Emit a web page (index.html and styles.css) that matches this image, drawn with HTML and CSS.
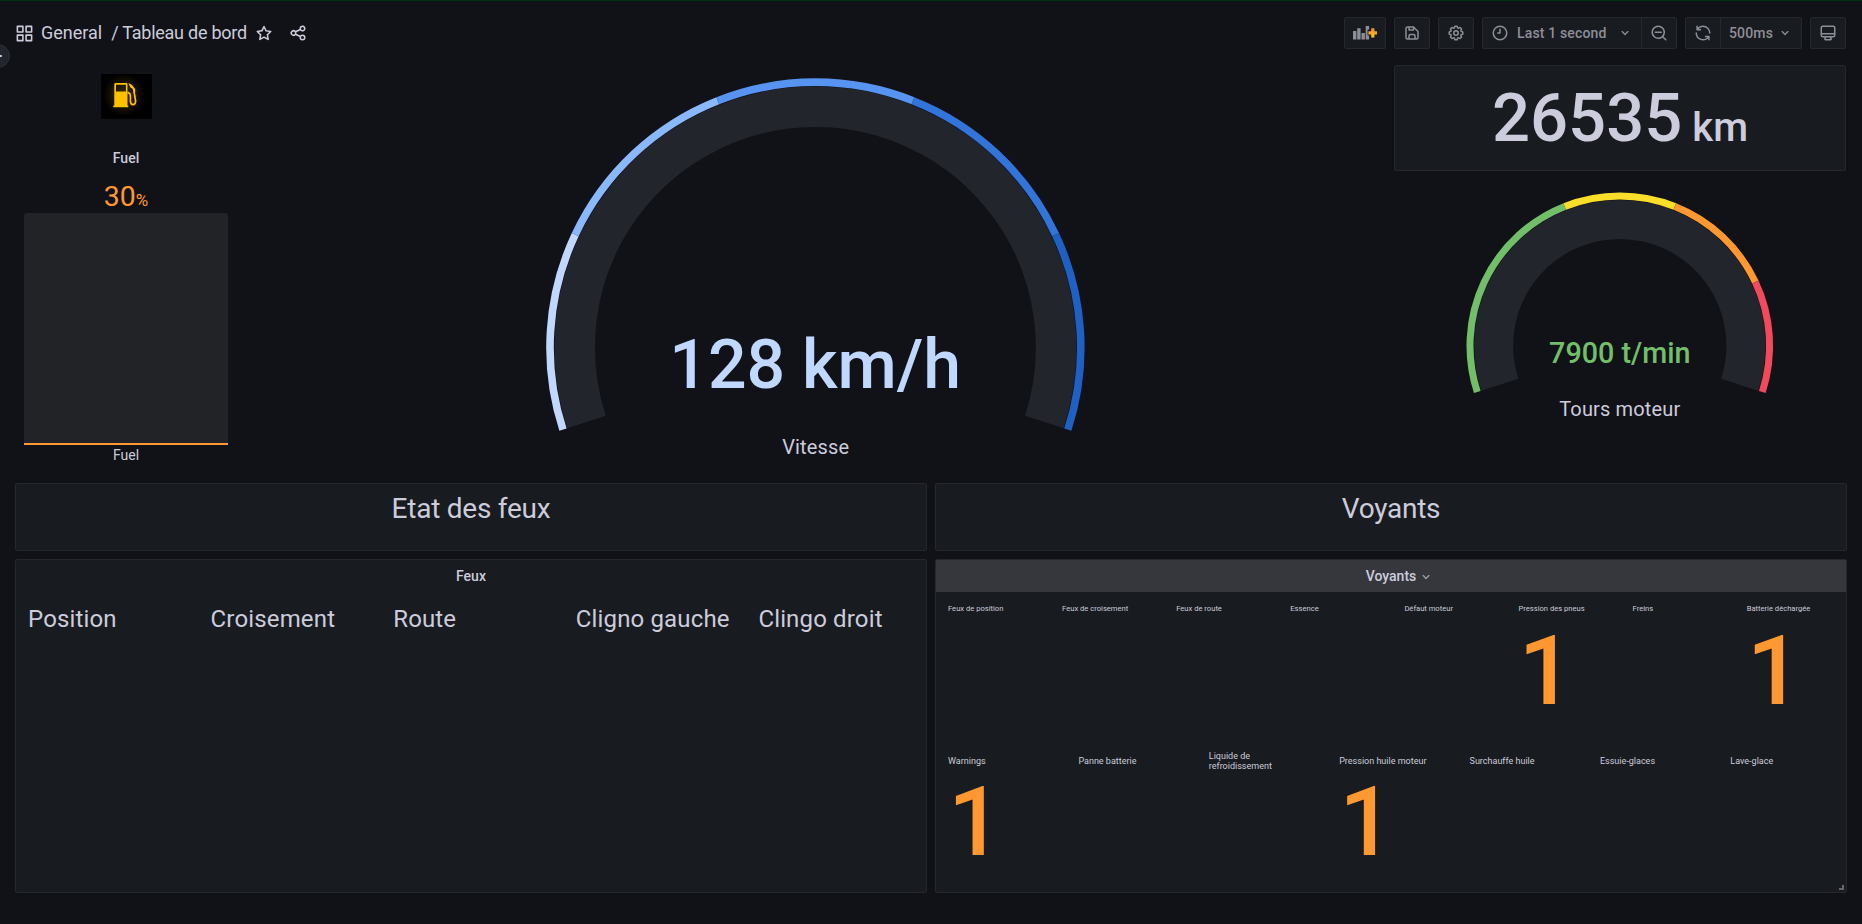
FILE: index.html
```
<!DOCTYPE html>
<html lang="fr">
<head>
<meta charset="utf-8">
<title>Tableau de bord</title>
<link rel="stylesheet" href="styles.css">
</head>
<body>
<div class="sidemenu-toggle"><span class="toggle-mark"></span></div>
<header class="navbar">
  <div class="crumbs">
    <svg class="icon icon-apps" viewBox="0 0 24 24"><path d="M10,13H3a1,1,0,0,0-1,1v7a1,1,0,0,0,1,1h7a1,1,0,0,0,1-1V14A1,1,0,0,0,10,13ZM9,20H4V15H9ZM21,2H14a1,1,0,0,0-1,1v7a1,1,0,0,0,1,1h7a1,1,0,0,0,1-1V3A1,1,0,0,0,21,2ZM20,9H15V4h5Zm1,4H14a1,1,0,0,0-1,1v7a1,1,0,0,0,1,1h7a1,1,0,0,0,1-1V14A1,1,0,0,0,21,13Zm-1,7H15V15h5ZM10,2H3A1,1,0,0,0,2,3v7a1,1,0,0,0,1,1h7a1,1,0,0,0,1-1V3A1,1,0,0,0,10,2ZM9,9H4V4H9Z"/></svg>
    <span class="crumb-folder">General</span>
    <span class="crumb-title">/ Tableau de bord</span>
    <svg class="icon icon-star" viewBox="0 0 24 24"><path d="M22,9.67A1,1,0,0,0,21.14,9l-5.69-.83L12.9,3a1,1,0,0,0-1.8,0L8.55,8.16,2.86,9a1,1,0,0,0-.81.68,1,1,0,0,0,.25,1l4.13,4-1,5.68A1,1,0,0,0,6.9,21.44L12,18.77l5.1,2.67a.93.93,0,0,0,.46.12,1,1,0,0,0,.59-.19,1,1,0,0,0,.4-1l-1-5.68,4.13-4A1,1,0,0,0,22,9.67Zm-6.15,4a1,1,0,0,0-.29.88l.72,4.2-3.76-2a1.06,1.06,0,0,0-.94,0l-3.76,2,.72-4.2a1,1,0,0,0-.29-.88l-3-3,4.21-.61a1,1,0,0,0,.76-.55L12,5.7l1.88,3.82a1,1,0,0,0,.76.55l4.21.61Z"/></svg>
    <svg class="icon icon-share" viewBox="0 0 24 24"><path d="M18,14a4,4,0,0,0-3.08,1.48l-5.1-2.35a3.64,3.64,0,0,0,0-2.26l5.1-2.35A4,4,0,1,0,14,6a4.17,4.17,0,0,0,.07.71L8.79,9.14a4,4,0,1,0,0,5.72l5.28,2.43A4.17,4.17,0,0,0,14,18a4,4,0,1,0,4-4ZM18,4a2,2,0,1,1-2,2A2,2,0,0,1,18,4ZM6,14a2,2,0,1,1,2-2A2,2,0,0,1,6,14Zm12,6a2,2,0,1,1,2-2A2,2,0,0,1,18,20Z"/></svg>
  </div>
  <div class="tools">
    <div class="group"><button class="tool tool-add"><svg class="icon-add" viewBox="0 0 24 14"><defs><linearGradient id="plus-fill" x1="0" y1="0" x2="0" y2="1"><stop offset="0" stop-color="#f58a2e"/><stop offset="1" stop-color="#fcc61a"/></linearGradient></defs><path class="bars" d="M0 5h3.400v8.400H0zM4.200 2.200h3.400v11.200H4.200zM8.500 7h3.400v6.400H8.500zM12.700 0h3.400v3.500h-1.500v6h1.500v3.900h-3.400z"/><path fill="url(#plus-fill)" d="M18.200 2.300h3.200v3h2.800v3.100h-2.800v3h-3.200v-3h-2.800V5.300h2.800z"/></svg></button></div>
    <div class="group"><button class="tool tool-icon"><svg class="icon" viewBox="0 0 24 24"><path d="m20.710 9.290-6-6a1 1 0 0 0-.32-.21A1.090 1.090 0 0 0 14 3H6a3 3 0 0 0-3 3v12a3 3 0 0 0 3 3h12a3 3 0 0 0 3-3v-8a1 1 0 0 0-.29-.71zM9 5h4v2H9zm6 14H9v-3a1 1 0 0 1 1-1h4a1 1 0 0 1 1 1zm4-1a1 1 0 0 1-1 1h-1v-3a3 3 0 0 0-3-3h-4a3 3 0 0 0-3 3v3H6a1 1 0 0 1-1-1V6a1 1 0 0 1 1-1h1v3a1 1 0 0 0 1 1h6a1 1 0 0 0 1-1V6.410l4 4z"/></svg></button></div>
    <div class="group"><button class="tool tool-icon"><svg class="icon" viewBox="0 0 24 24"><path d="M21.320,9.550l-1.890-.63.89-1.780A1,1,0,0,0,20.130,6L18,3.870a1,1,0,0,0-1.150-.19l-1.780.89-.63-1.890A1,1,0,0,0,13.500,2h-3a1,1,0,0,0-.95.68L8.920,4.570,7.140,3.680A1,1,0,0,0,6,3.870L3.870,6a1,1,0,0,0-.19,1.150l.89,1.780-1.890.63A1,1,0,0,0,2,10.500v3a1,1,0,0,0,.68.95l1.890.63-.89,1.780A1,1,0,0,0,3.870,18L6,20.130a1,1,0,0,0,1.150.19l1.780-.89.63,1.890a1,1,0,0,0,.95.68h3a1,1,0,0,0,.95-.68l.63-1.890,1.780.89A1,1,0,0,0,18,20.130L20.130,18a1,1,0,0,0,.19-1.150l-.89-1.780,1.890-.63A1,1,0,0,0,22,13.500v-3A1,1,0,0,0,21.320,9.550ZM20,12.780l-1.200.4A2,2,0,0,0,17.640,16l.57,1.140-1.100,1.100L16,17.640a2,2,0,0,0-2.790,1.160l-.4,1.200H11.220l-.4-1.200A2,2,0,0,0,8,17.640l-1.140.57-1.100-1.100L6.360,16A2,2,0,0,0,5.200,13.180L4,12.780V11.220l1.200-.4A2,2,0,0,0,6.360,8L5.790,6.890l1.100-1.100L8,6.360A2,2,0,0,0,10.820,5.200l.4-1.200h1.560l.4,1.200A2,2,0,0,0,16,6.360l1.140-.57,1.100,1.100L17.640,8a2,2,0,0,0,1.160,2.790l1.200.4ZM12,8a4,4,0,1,0,4,4A4,4,0,0,0,12,8Zm0,6a2,2,0,1,1,2-2A2,2,0,0,1,12,14Z"/></svg></button></div>
    <div class="group">
      <button class="tool tool-range"><svg class="icon" viewBox="0 0 24 24"><g class="line"><circle cx="12" cy="12" r="9"/><path d="M12 7v5H9"/></g></svg><span>Last 1 second</span><svg class="icon chevron" viewBox="0 0 24 24"><path d="M17,9.170a1,1,0,0,0-1.410,0L12,12.710,8.460,9.170a1,1,0,0,0-1.410,0,1,1,0,0,0,0,1.420l4.240,4.240a1,1,0,0,0,1.420,0L17,10.590A1,1,0,0,0,17,9.170Z"/></svg></button>
      <button class="tool tool-icon"><svg class="icon" viewBox="0 0 24 24"><path d="M21.710,20.290,18,16.610A9,9,0,1,0,16.610,18l3.680,3.680a1,1,0,0,0,1.420,0A1,1,0,0,0,21.710,20.290ZM11,18a7,7,0,1,1,7-7A7,7,0,0,1,11,18Zm4-8H7a1,1,0,0,0,0,2h8a1,1,0,0,0,0-2Z"/></svg></button>
    </div>
    <div class="group">
      <button class="tool tool-icon"><svg class="icon" viewBox="0 0 24 24"><path d="M19.910,15.510H15.380a1,1,0,0,0,0,2h2.400A8,8,0,0,1,4,12a1,1,0,0,0-2,0,10,10,0,0,0,16.880,7.230V21a1,1,0,0,0,2,0V16.500A1,1,0,0,0,19.910,15.510ZM12,2A10,10,0,0,0,5.120,4.770V3a1,1,0,0,0-2,0V7.500a1,1,0,0,0,1,1h4.500a1,1,0,0,0,0-2H6.220A8,8,0,0,1,20,12a1,1,0,0,0,2,0A10,10,0,0,0,12,2Z"/></svg></button>
      <button class="tool tool-interval"><span>500ms</span><svg class="icon chevron" viewBox="0 0 24 24"><path d="M17,9.170a1,1,0,0,0-1.410,0L12,12.710,8.460,9.170a1,1,0,0,0-1.410,0,1,1,0,0,0,0,1.420l4.240,4.240a1,1,0,0,0,1.420,0L17,10.590A1,1,0,0,0,17,9.170Z"/></svg></button>
    </div>
    <div class="group"><button class="tool tool-icon"><svg class="icon" viewBox="0 0 24 24"><path d="M19,2H5A3,3,0,0,0,2,5V15a3,3,0,0,0,3,3H7.640l-.58,1a2,2,0,0,0,0,2,2,2,0,0,0,1.750,1h6.460A2,2,0,0,0,17,21a2,2,0,0,0,0-2l-.59-1H19a3,3,0,0,0,3-3V5A3,3,0,0,0,19,2ZM8.770,20,10,18H14l1.200,2ZM20,15a1,1,0,0,1-1,1H5a1,1,0,0,1-1-1V14H20Zm0-3H4V5A1,1,0,0,1,5,4H19a1,1,0,0,1,1,1Z"/></svg></button></div>
  </div>
</header>

<main class="dashboard">
  <section class="fuel-picture">
    <svg class="pump" viewBox="0 0 51 45">
      <defs><radialGradient id="glow"><stop offset="0" stop-color="#3a2c00"/><stop offset=".6" stop-color="#191300"/><stop offset="1" stop-color="#000"/></radialGradient></defs>
      <rect width="51" height="45" fill="#000"/>
      <circle cx="23" cy="21" r="21" fill="url(#glow)"/>
      <path class="pump-body" d="M13.300 10.300q0-1.300 1.300-1.300h10.600q1.300 0 1.300 1.300V31.500h.8V33.300H12.300V31.500h1zM15 10.800v6.800h9.900v-6.800z" fill-rule="evenodd"/>
      <path class="pump-hose" d="M26.500 18.600q2.900 0 2.900 4v4.400q0 3.600 2.600 3.600t2.600-3.600L33 17.500"/>
      <path class="pump-body" d="M27.300 8.900l3.500 1.800 3.400 4.300v3l-1.800 .3-.6-3.300-2.400-1.600z"/>
    </svg>
  </section>

  <section class="fuel-bar">
    <h2 class="panel-title">Fuel</h2>
    <div class="bar-value">30<span class="bar-unit">%</span></div>
    <div class="bar"></div>
    <div class="bar-label">Fuel</div>
  </section>

  <section class="speed">
    <svg class="gauge" viewBox="6 0 1142 410">
      <g transform="translate(-.3 .6)">
        <g class="gauge-ring" stroke-width="40.500"><path d="M347.800 356.400A240.700 240.700 0 1 1 805.600 356.400"/></g>
        <g class="gauge-scale" stroke-width="7.600">
          <path pathLength="100" stroke="#C0D8FF" stroke-dasharray="20 100" d="M324.300 364A265.400 265.400 0 1 1 829.100 364"/>
          <path pathLength="100" stroke="#8AB8FF" stroke-dasharray="20 100" stroke-dashoffset="-20" d="M324.300 364A265.400 265.400 0 1 1 829.100 364"/>
          <path pathLength="100" stroke="#5794F2" stroke-dasharray="20 100" stroke-dashoffset="-40" d="M324.300 364A265.400 265.400 0 1 1 829.100 364"/>
          <path pathLength="100" stroke="#3274D9" stroke-dasharray="20 100" stroke-dashoffset="-60" d="M324.300 364A265.400 265.400 0 1 1 829.100 364"/>
          <path pathLength="100" stroke="#1F60C4" stroke-dasharray="20 100" stroke-dashoffset="-80" d="M324.300 364A265.400 265.400 0 1 1 829.100 364"/>
        </g>
      </g>
      <text class="speed-value" x="576.200" y="323.300">128 km/h</text>
      <text class="gauge-label" x="576.700" y="389">Vitesse</text>
    </svg>
  </section>

  <section class="panel odometer"><span class="odo-value">26535</span><span class="odo-unit">km</span></section>

  <section class="rpm">
    <svg class="gauge" viewBox="0 0 452 296">
      <g transform="translate(0 .4)">
        <g class="gauge-ring" stroke-width="39"><path d="M105.900 205.300A126.100 126.100 0 1 1 345.700 205.300"/></g>
        <g class="gauge-scale" stroke-width="7">
          <path pathLength="100" stroke="#73BF69" stroke-dasharray="40 100" d="M83.300 212.600A149.800 149.800 0 1 1 368.300 212.600"/>
          <path pathLength="100" stroke="#FADE2A" stroke-dasharray="20 100" stroke-dashoffset="-40" d="M83.300 212.600A149.800 149.800 0 1 1 368.300 212.600"/>
          <path pathLength="100" stroke="#FF9830" stroke-dasharray="20 100" stroke-dashoffset="-60" d="M83.300 212.600A149.800 149.800 0 1 1 368.300 212.600"/>
          <path pathLength="100" stroke="#F2495C" stroke-dasharray="20 100" stroke-dashoffset="-80" d="M83.300 212.600A149.800 149.800 0 1 1 368.300 212.600"/>
        </g>
      </g>
      <text class="rpm-value" x="225.800" y="184">7900 t/min</text>
      <text class="gauge-label" x="225.800" y="237">Tours moteur</text>
    </svg>
  </section>

  <section class="panel heading heading-left">Etat des feux</section>
  <section class="panel heading heading-right">Voyants</section>

  <section class="panel lights">
    <h2 class="panel-title">Feux</h2>
    <div class="lights-row"><span>Position</span><span>Croisement</span><span>Route</span><span>Cligno gauche</span><span>Clingo droit</span></div>
  </section>

  <section class="panel warnings">
    <h2 class="panel-title panel-title-hover"><span>Voyants</span><svg class="icon chevron" viewBox="0 0 24 24"><path d="M17,9.170a1,1,0,0,0-1.410,0L12,12.710,8.460,9.170a1,1,0,0,0-1.410,0,1,1,0,0,0,0,1.420l4.240,4.240a1,1,0,0,0,1.420,0L17,10.590A1,1,0,0,0,17,9.170Z"/></svg></h2>
    <div class="stats stats-top">
      <div class="stat"><div class="stat-name">Feux de position</div></div>
      <div class="stat"><div class="stat-name">Feux de croisement</div></div>
      <div class="stat"><div class="stat-name">Feux de route</div></div>
      <div class="stat"><div class="stat-name">Essence</div></div>
      <div class="stat"><div class="stat-name">Défaut moteur</div></div>
      <div class="stat"><div class="stat-name">Pression des pneus</div><div class="stat-value">1</div></div>
      <div class="stat"><div class="stat-name">Freins</div></div>
      <div class="stat"><div class="stat-name">Batterie déchargée</div><div class="stat-value">1</div></div>
    </div>
    <div class="stats stats-bottom">
      <div class="stat"><div class="stat-name">Warnings</div><div class="stat-value">1</div></div>
      <div class="stat"><div class="stat-name">Panne batterie</div></div>
      <div class="stat"><div class="stat-name">Liquide de<br>refroidissement</div></div>
      <div class="stat"><div class="stat-name">Pression huile moteur</div><div class="stat-value">1</div></div>
      <div class="stat"><div class="stat-name">Surchauffe huile</div></div>
      <div class="stat"><div class="stat-name">Essuie-glaces</div></div>
      <div class="stat"><div class="stat-name">Lave-glace</div></div>
    </div>
    <span class="resize-handle"></span>
  </section>
</main>
</body>
</html>
```
FILE: styles.css
```
* { box-sizing: border-box; }
body {
  margin: 0;
  height: 924px;
  overflow: hidden;
  position: relative;
  background: #111217;
  color: #ccccdc;
  border-top: 1px solid #00330f;
  font-family: Roboto, "Liberation Sans", sans-serif;
  font-size: 14px;
  line-height: 22px;
}
.icon { width: 18px; height: 18px; flex: none; fill: currentColor; }
.line { fill: none; stroke: currentColor; stroke-width: 2; stroke-linecap: round; stroke-linejoin: round; }

.sidemenu-toggle {
  position: absolute;
  left: -14px;
  top: 43px;
  width: 24px;
  height: 24px;
  border: 1px solid #2c2f35;
  border-radius: 50%;
  background: #22252b;
}
.toggle-mark { position: absolute; left: 12px; top: 10px; width: 3px; height: 2px; border-radius: 1px; background: #ccccdc; }

.navbar { height: 64px; padding: 0 16px 0 14px; display: flex; justify-content: space-between; align-items: center; }
.crumbs { display: flex; align-items: center; font-size: 18px; line-height: 24px; }
.icon-apps { width: 19px; height: 19px; margin-left: .5px; }
.crumb-folder { margin-left: 7.500px; }
.crumb-title { margin-left: 9px; letter-spacing: -.25px; }
.icon-star { margin-left: 8px; }
.icon-share { margin-left: 16px; }

.tools { display: flex; gap: 8px; }
.group { display: flex; border: 1px solid #26282d; border-radius: 2px; background: #181b1f; }
.tool {
  height: 30px;
  padding: 0;
  border: 0;
  background: none;
  color: #8e8e99;
  font: 500 14px/30px Roboto, "Liberation Sans", sans-serif;
  letter-spacing: .15px;
  display: flex;
  align-items: center;
  justify-content: center;
}
.tool + .tool { border-left: 1px solid #26282d; }
.tool-icon { width: 34px; }
.tool + .tool-icon { width: 35px; }
.tool-add { width: 40px; }
.tool-range { width: 158px; justify-content: flex-start; padding-left: 8px; gap: 8px; }
.tool-range .chevron { margin-left: auto; margin-right: 8px; }
.tool-interval { width: 81px; justify-content: flex-start; padding-left: 8px; gap: 4px; }
.chevron { width: 16px; height: 16px; }
.icon-add { width: 24px; height: 14px; }
.bars { fill: #8e8e99; }

.dashboard {
  width: 1832px;
  margin-left: 15px;
  display: grid;
  grid-template-columns: repeat(24, minmax(0, 1fr));
  grid-auto-rows: 30px;
  gap: 8px;
}
.panel { position: relative; border: 1px solid #25272c; border-radius: 2px; background: #181b1f; }
.panel-title { margin: 0; height: 32px; font-size: 14px; font-weight: 500; line-height: 32px; text-align: center; }

.fuel-picture { grid-area: 1 / 1 / 3 / 4; display: flex; justify-content: center; align-items: flex-start; padding-top: 9px; }
.pump { width: 51px; height: 45px; }
.pump-body { fill: #ffc000; }
.pump-hose { fill: none; stroke: #ffc000; stroke-width: 1.7; }

.fuel-bar { grid-area: 3 / 1 / 12 / 4; padding: 1px 9px 0; }
.bar-value { height: 39px; font-size: 28.400px; line-height: 46px; text-align: center; color: #ff9830; }
.bar-unit { font-size: 17px; }
.bar { height: 232px; border-bottom: 2px solid #ff9830; border-radius: 3px 3px 0 0; background: #222326; }
.bar-label { text-align: center; line-height: 20px; }

.speed { grid-area: 1 / 4 / 12 / 19; }
.rpm { grid-area: 4 / 19 / 12 / 25; margin: 0 1px 0 -1px; }
.gauge { display: block; width: 100%; }
.gauge-ring { fill: none; stroke: #22252b; }
.gauge-scale { fill: none; }
.gauge text { text-anchor: middle; }
.speed-value { font-size: 68px; font-weight: 500; fill: #c0d8ff; }
.rpm-value { font-size: 28.700px; font-weight: 500; fill: #73bf69; }
.gauge-label { font-size: 20px; letter-spacing: .15px; fill: #ccccdc; }

.odometer { grid-area: 1 / 19 / 4 / 25; margin: 0 1px 0 -1px; display: flex; justify-content: center; align-items: baseline; font-weight: 500; }
.odo-value { font-size: 67px; line-height: 104px; }
.odo-unit { font-size: 40px; margin-left: 10px; }

.heading { font-size: 28px; line-height: 50px; letter-spacing: -.25px; text-align: center; }
.heading-left { grid-area: 12 / 1 / 14 / 13; }
.heading-right { grid-area: 12 / 13 / 14 / 25; }

.lights { grid-area: 14 / 1 / 23 / 13; }
.lights-row { display: grid; grid-template-columns: repeat(5, 182.600px); padding: 10px 0 0 12px; font-size: 24px; line-height: 34px; letter-spacing: .15px; white-space: nowrap; }

.warnings { grid-area: 14 / 13 / 23 / 25; display: flex; flex-direction: column; }
.panel-title-hover { background: #36373c; display: flex; align-items: center; justify-content: center; flex: none; padding-left: 18px; }
.panel-title-hover .chevron { color: #9d9da8; margin-left: 2px; margin-top: 1px; }
.stats { display: grid; flex: none; padding-left: 12px; white-space: nowrap; }
.stats-top { grid-template-columns: repeat(8, 114.100px); height: 152px; font-size: 7.600px; }
.stats-bottom { grid-template-columns: repeat(7, 130.400px); height: 148px; font-size: 9px; }
.stat { display: flex; flex-direction: column; }
.stat-name { height: 34px; line-height: 10px; display: flex; align-items: center; }
.stat-value { color: #ff9830; font-weight: 500; font-size: 97px; line-height: 90px; }
.stats-bottom .stat-value { font-size: 95.500px; line-height: 88px; }
.resize-handle { position: absolute; right: 2px; bottom: 2px; width: 5px; height: 5px; border-right: 2px solid #66666c; border-bottom: 2px solid #66666c; }
```
